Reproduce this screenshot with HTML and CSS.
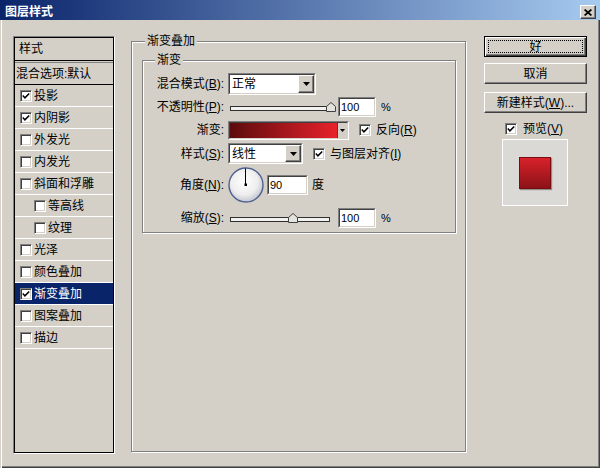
FILE: index.html
```html
<!DOCTYPE html>
<html lang="zh-CN">
<head>
<meta charset="utf-8">
<title>图层样式</title>
<link rel="stylesheet" href="styles.css">
</head>
<body>
<div class="window">
  <div class="titlebar">
    <span class="title">图层样式</span>
    <span class="close raised"><svg width="8" height="7" viewBox="0 0 8 7"><path d="M0.6 0.5 L7.4 6.5 M7.4 0.5 L0.6 6.5" stroke="#000" stroke-width="1.7" fill="none"/></svg></span>
  </div>
  <div class="body">
    <div class="list">
      <div class="list-inner">
        <div class="list-head">样式</div>
        <div class="list-blend">混合选项:默认</div>
        <div class="item"><span class="cb"><svg width="10" height="10" viewBox="0 0 10 10"><path d="M1.8 4.6 L3.9 6.8 L8.2 2.4" stroke="#000" stroke-width="1.5" fill="none"/></svg></span>投影</div>
        <div class="item"><span class="cb"><svg width="10" height="10" viewBox="0 0 10 10"><path d="M1.8 4.6 L3.9 6.8 L8.2 2.4" stroke="#000" stroke-width="1.5" fill="none"/></svg></span>内阴影</div>
        <div class="item"><span class="cb"></span>外发光</div>
        <div class="item"><span class="cb"></span>内发光</div>
        <div class="item"><span class="cb"></span>斜面和浮雕</div>
        <div class="item sub"><span class="cb"></span>等高线</div>
        <div class="item sub"><span class="cb"></span>纹理</div>
        <div class="item"><span class="cb"></span>光泽</div>
        <div class="item"><span class="cb"></span>颜色叠加</div>
        <div class="item sel"><span class="cb"><svg width="10" height="10" viewBox="0 0 10 10"><path d="M1.8 4.6 L3.9 6.8 L8.2 2.4" stroke="#000" stroke-width="1.5" fill="none"/></svg></span>渐变叠加</div>
        <div class="item"><span class="cb"></span>图案叠加</div>
        <div class="item"><span class="cb"></span>描边</div>
      </div>
    </div>

    <div class="group outer">
      <div class="legend">渐变叠加</div>
      <div class="group inner">
        <div class="legend">渐变</div>

        <div class="row r1">
          <span class="lbl">混合模式(<u>B</u>):</span>
          <div class="combo sunk"><div class="in"><span class="val">正常</span><span class="dd raised"><svg width="7" height="4" viewBox="0 0 7 4"><path d="M0 0 H7 L3.5 4 Z" fill="#000"/></svg></span></div></div>
        </div>

        <div class="row r2">
          <span class="lbl">不透明性(<u>P</u>):</span>
          <svg class="slider" width="106" height="10" viewBox="0 0 106 10"><rect x="0.5" y="4.5" width="104" height="4" fill="#f2f2f0" stroke="#303030"/><path d="M96.5 9.5 V4.5 L101 0.5 L105.5 4.5 V9.5 Z" fill="#e4e2dc" stroke="#404040"/></svg>
          <div class="field sunk"><div class="in">100</div></div>
          <span class="pct">%</span>
        </div>

        <div class="row r3">
          <span class="lbl">渐变:</span>
          <div class="swatch sunk"><div class="in"><span class="grad"></span><span class="swarr"><svg width="5" height="3" viewBox="0 0 5 3"><path d="M0 0 H5 L2.5 3 Z" fill="#000"/></svg></span></div></div>
          <span class="cb cbm"><svg width="10" height="10" viewBox="0 0 10 10"><path d="M1.8 4.6 L3.9 6.8 L8.2 2.4" stroke="#000" stroke-width="1.5" fill="none"/></svg></span>
          <span class="cbt">反向(<u>R</u>)</span>
        </div>

        <div class="row r4">
          <span class="lbl">样式(<u>S</u>):</span>
          <div class="combo sm sunk"><div class="in"><span class="val">线性</span><span class="dd raised"><svg width="7" height="4" viewBox="0 0 7 4"><path d="M0 0 H7 L3.5 4 Z" fill="#000"/></svg></span></div></div>
          <span class="cb cbm"><svg width="10" height="10" viewBox="0 0 10 10"><path d="M1.8 4.6 L3.9 6.8 L8.2 2.4" stroke="#000" stroke-width="1.5" fill="none"/></svg></span>
          <span class="cbt">与图层对齐(<u>I</u>)</span>
        </div>

        <div class="row r5">
          <span class="lbl">角度(<u>N</u>):</span>
          <svg class="dial" width="36" height="36" viewBox="0 0 36 36">
            <defs><radialGradient id="dg" cx="45%" cy="40%" r="60%"><stop offset="0" stop-color="#ffffff"/><stop offset="0.65" stop-color="#eeeeee"/><stop offset="1" stop-color="#c4c6d0"/></radialGradient></defs>
            <circle cx="18" cy="18" r="17" fill="url(#dg)" stroke="#4d6191" stroke-width="1.4"/>
            <line x1="17.5" y1="18" x2="17.5" y2="1.5" stroke="#000" stroke-width="1"/>
            <rect x="16.5" y="16.5" width="2.5" height="2.5" fill="#000"/>
          </svg>
          <div class="field wide sunk"><div class="in">90</div></div>
          <span class="deg">度</span>
        </div>

        <div class="row r6">
          <span class="lbl">缩放(<u>S</u>):</span>
          <svg class="slider" width="106" height="10" viewBox="0 0 106 10"><rect x="0.5" y="4.5" width="99" height="4" fill="#f2f2f0" stroke="#303030"/><path d="M58.5 9.5 V4.5 L63 0.5 L67.5 4.5 V9.5 Z" fill="#e4e2dc" stroke="#404040"/></svg>
          <div class="field sunk"><div class="in">100</div></div>
          <span class="pct">%</span>
        </div>
      </div>
    </div>

    <div class="side">
      <div class="btn def raised"><span class="focus">好</span></div>
      <div class="btn cancel raised">取消</div>
      <div class="btn new raised">新建样式(<u>W</u>)...</div>
      <div class="pv"><span class="cb"><svg width="10" height="10" viewBox="0 0 10 10"><path d="M1.8 4.6 L3.9 6.8 L8.2 2.4" stroke="#000" stroke-width="1.5" fill="none"/></svg></span><span class="pvt">预览(<u>V</u>)</span></div>
      <div class="pbox"><div class="swred"></div></div>
    </div>
  </div>
</div>
</body>
</html>
```
FILE: styles.css
```css
* { box-sizing: border-box; }
html, body { margin: 0; padding: 0; }
body {
  font-family: "Liberation Sans", "Noto Sans CJK SC", sans-serif;
  font-size: 12px;
  line-height: 14px;
  color: #000;
  background: #d4d0c8;
}
u { text-decoration: underline; text-underline-offset: 1px; }

.window {
  width: 600px;
  height: 468px;
  background: #d4d0c8;
  overflow: hidden;
  box-shadow: inset 1px 0 0 #d4d0c8, inset 2px 0 0 #fff, inset -1px -1px 0 #404040, inset -2px -2px 0 #808080;
}

.raised {
  background: #d4d0c8;
  border: 1px solid;
  border-color: #fff #404040 #404040 #fff;
  box-shadow: inset -1px -1px 0 #808080;
}
.sunk {
  border: 1px solid;
  border-color: #808080 #fff #fff #808080;
}
.sunk > .in {
  height: 100%;
  border: 1px solid;
  border-color: #404040 #d4d0c8 #d4d0c8 #404040;
  background: #fff;
  display: flex;
  align-items: center;
}

/* title bar */
.titlebar {
  height: 20px;
  display: flex;
  align-items: center;
  padding: 4px 4px 0 5px;
  background: linear-gradient(to right, #0a246a, #a6caf0);
}
.title { color: #fff; font-weight: bold; font-size: 12px; line-height: 16px; }
.close {
  margin-left: auto;
  width: 16px;
  height: 14px;
  display: flex;
  align-items: center;
  justify-content: center;
}

.body {
  display: flex;
  align-items: flex-start;
  padding: 16px 0 0 13px;
}

/* left list */
.list {
  width: 102px;
  height: 418px;
  border: 1px solid;
  border-color: #808080 #fff #fff #808080;
  flex-shrink: 0;
}
.list-inner { height: 100%; border: 1px solid #000; }
.list-head {
  height: 23px;
  border-bottom: 1px solid #000;
  padding-left: 4px;
  display: flex;
  align-items: center;
}
.list-blend {
  margin-top: 1px;
  height: 23px;
  border-top: 1px solid #808080;
  border-bottom: 1px solid #000;
  padding-left: 1px;
  display: flex;
  align-items: center;
}
.item {
  height: 22px;
  border-bottom: 1px solid #fff;
  padding-left: 5px;
  display: flex;
  align-items: center;
}
.item.sub { padding-left: 19px; }
.item.sel { background: #0a246a; color: #fff; }

.cb {
  width: 12px;
  height: 12px;
  flex-shrink: 0;
  border: 1px solid;
  border-color: #808080 #fff #fff #808080;
  box-shadow: inset 1px 1px 0 #404040, inset -1px -1px 0 #d4d0c8;
  background: #fff;
  margin-right: 2px;
  display: flex;
}
.cb svg { display: block; }

/* group boxes */
.group {
  border: 1px solid #808080;
  box-shadow: inset 1px 1px 0 #fff, 1px 1px 0 #fff;
}
.outer {
  width: 335px;
  height: 411px;
  margin: 5px 0 0 16px;
  flex-shrink: 0;
}
.legend {
  width: max-content;
  height: 14px;
  line-height: 14px;
  margin: -8px 0 0 13px;
  padding: 0 2px;
  background: #d4d0c8;
}
.inner {
  width: 314px;
  margin: 12px 0 0 10px;
  padding-bottom: 4px;
}
.inner > .legend { margin-left: 12px; }

.row { display: flex; align-items: center; }
.lbl { width: 81px; flex-shrink: 0; text-align: right; margin-right: 4px; white-space: nowrap; }
.r1 { height: 22px; margin-top: 6px; }
.r2 { height: 22px; margin-top: 1px; }
.r3 { height: 20px; margin-top: 2px; }
.r4 { height: 21px; margin-top: 3px; }
.r5 { height: 36px; margin-top: 3px; }
.r6 { height: 21px; margin-top: 4px; }

.combo { width: 88px; height: 22px; }
.combo.sm { width: 75px; height: 21px; }
.combo .val { flex: 1; padding-left: 2px; }
.dd {
  width: 16px;
  height: 100%;
  display: flex;
  align-items: center;
  justify-content: center;
}
.dd svg { display: block; }

.slider { display: block; margin-left: 2px; flex-shrink: 0; }
.field { width: 38px; height: 20px; margin-left: 2px; }
.field.wide { width: 41px; margin-left: 3px; }
.field .in { padding-left: 1px; font-size: 11px; }
.pct { margin-left: 5px; font-size: 11px; }
.deg { margin-left: 4px; }

.swatch { width: 121px; height: 19px; }
.swatch .in { background: #d4d0c8; }
.grad { flex: 1; height: 100%; background: linear-gradient(to right, #5c0b0d, #e8222b); }
.swarr {
  width: 10px;
  height: 100%;
  border-left: 1px solid #404040;
  display: flex;
  align-items: center;
  justify-content: center;
}
.cbm { margin-left: 10px; margin-right: 0; }
.cbt { margin-left: 5px; white-space: nowrap; }
.dial { display: block; flex-shrink: 0; }

/* right column */
.side { width: 103px; margin-left: 18px; flex-shrink: 0; }
.btn {
  height: 21px;
  display: flex;
  align-items: center;
  justify-content: center;
  white-space: nowrap;
}
.btn.def {
  border-color: #000;
  box-shadow: inset 1px 1px 0 #fff, inset -1px -1px 0 #404040, inset -2px -2px 0 #808080;
  padding: 3px;
}
.focus {
  width: 100%;
  height: 100%;
  border: 1px dotted #000;
  display: flex;
  align-items: center;
  justify-content: center;
}
.cancel { margin-top: 6px; }
.new { margin-top: 8px; }
.pv {
  display: flex;
  align-items: center;
  height: 14px;
  margin-top: 9px;
  padding-left: 21px;
}
.pv .cb { margin-right: 6px; }
.pbox {
  width: 66px;
  height: 67px;
  margin: 3px 0 0 18px;
  border: 1px solid #fff;
  background: #dad9d6;
  display: flex;
  align-items: center;
  justify-content: center;
}
.swred {
  width: 32px;
  height: 32px;
  background: linear-gradient(to bottom, #d8222b, #8c1217);
  border: 1px solid #7a0d10;
  box-shadow: 1px 1px 1px rgba(0, 0, 0, 0.35);
}
```
